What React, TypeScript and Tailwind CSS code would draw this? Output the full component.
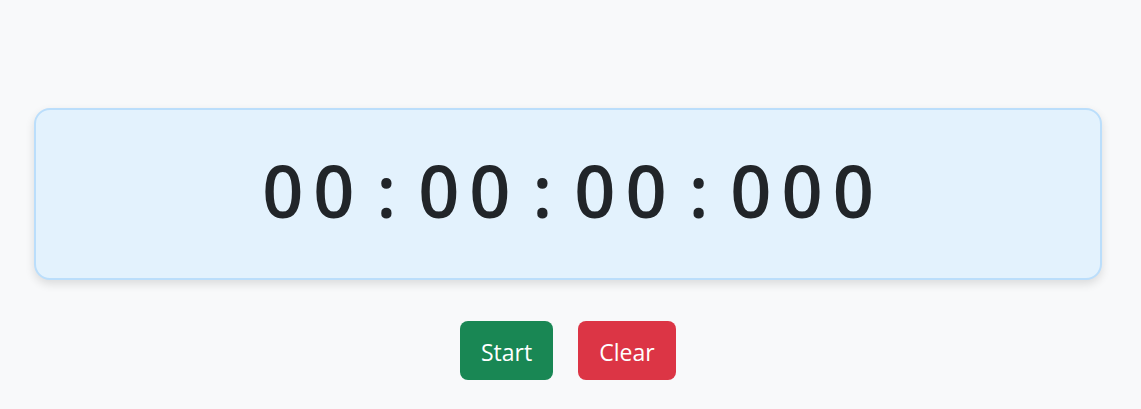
export default function App() {
  const groups = ["00", "00", "00", "000"];

  return (
    <div className="min-h-[409px] bg-[#f8f9fa] pt-[108px] pl-[34px] pr-[39px] font-['Open_Sans','Noto_Sans',sans-serif]">
      <div className="flex h-[172px] items-center justify-center rounded-2xl border-2 border-[#bbdefb] bg-[#e3f2fd] shadow-[0_4px_10px_rgba(0,0,0,0.12)]">
        <div className="flex items-center pb-[8px] text-[72px] font-semibold leading-none text-[#212529]">
          {groups.map((g, i) => (
            <span key={i} className="flex items-center">
              {i > 0 && <span className="mx-[12px] tracking-[10px]">:</span>}
              <span className={i === groups.length - 1 ? "tracking-[10px] -mr-[10px]" : "tracking-[10px]"}>{g}</span>
            </span>
          ))}
        </div>
      </div>

      <div className="mt-[41px] flex justify-center gap-[25px]">
        <button className="flex h-[59px] w-[93px] items-center justify-center rounded-lg bg-[#198754] pt-[3px] text-[23px] text-white">
          Start
        </button>
        <button className="flex h-[59px] w-[98px] items-center justify-center rounded-lg bg-[#dc3545] pt-[3px] text-[23px] text-white">
          Clear
        </button>
      </div>
    </div>
  );
}
